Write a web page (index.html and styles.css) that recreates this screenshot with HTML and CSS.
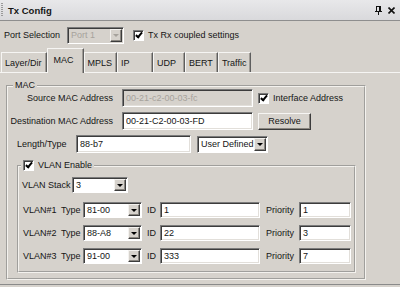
FILE: index.html
```html
<!DOCTYPE html>
<html lang="en">
<head>
    <meta charset="UTF-8">
    <meta name="viewport" content="width=device-width, initial-scale=1.0">
    <title>Tx Config</title>
    <link rel="stylesheet" href="styles.css">
</head>
<body>
    <div class="titlebar">
        <span class="grip"></span>
        <span class="title">Tx Config</span>
        <span class="title-btns">
            <svg width="7" height="9" viewBox="0 0 7 9">
                <rect x="1.5" y="0.5" width="4" height="5" fill="none" stroke="#111"/>
                <line x1="4.5" y1="0.5" x2="4.5" y2="5" stroke="#111"/>
                <line x1="0" y1="5.5" x2="7" y2="5.5" stroke="#111"/>
                <line x1="3.5" y1="6" x2="3.5" y2="9" stroke="#111"/>
            </svg>
            <svg width="7" height="7" viewBox="0 0 7 7">
                <path d="M0.5 0.5 L6.5 6.5 M6.5 0.5 L0.5 6.5" stroke="#111" stroke-width="1.6"/>
            </svg>
        </span>
    </div>

    <div class="toolbar">
        <span class="port-label">Port Selection</span>
        <div class="combo combo-port disabled"><span class="combo-text">Port 1</span><span class="drop"></span></div>
        <span class="check checked coupled-check"></span>
        <span class="check-text">Tx Rx coupled settings</span>
    </div>

    <div class="tabs">
        <span class="tab">Layer/Dir</span>
        <span class="tab active">MAC</span>
        <span class="tab">MPLS</span>
        <span class="tab tab-ip">IP</span>
        <span class="tab">UDP</span>
        <span class="tab">BERT</span>
        <span class="tab">Traffic</span>
    </div>

    <div class="panel">
        <fieldset class="group mac-group">
            <legend>MAC</legend>

            <div class="row first-row">
                <label class="addr-label">Source MAC Address</label>
                <input class="field addr-field" type="text" value="00-21-c2-00-03-fc" disabled>
                <span class="check checked side-check"></span>
                <span class="check-text">Interface Address</span>
            </div>

            <div class="row">
                <label class="addr-label">Destination MAC Address</label>
                <input class="field addr-field" type="text" value="00-21-C2-00-03-FD">
                <button class="btn">Resolve</button>
            </div>

            <div class="row">
                <label class="type-label">Length/Type</label>
                <input class="field type-field" type="text" value="88-b7">
                <div class="combo combo-type"><span class="combo-text">User Defined</span><span class="drop"></span></div>
            </div>

            <fieldset class="group vlan-group">
                <legend><span class="legend-check"><span class="check checked"></span>VLAN Enable</span></legend>

                <div class="stack-row">
                    <span class="stack-label">VLAN Stack</span>
                    <div class="combo combo-stack"><span class="combo-text">3</span><span class="drop"></span></div>
                </div>

                <div class="vlan-rows">
                    <div class="vlan-row">
                        <span class="vlan-name">VLAN#1</span>
                        <span class="vlan-type">Type</span>
                        <div class="combo combo-vtype"><span class="combo-text">81-00</span><span class="drop"></span></div>
                        <span class="vlan-id">ID</span>
                        <input class="field id-field" type="text" value="1">
                        <span class="vlan-prio">Priority</span>
                        <input class="field prio-field" type="text" value="1">
                    </div>
                    <div class="vlan-row">
                        <span class="vlan-name">VLAN#2</span>
                        <span class="vlan-type">Type</span>
                        <div class="combo combo-vtype"><span class="combo-text">88-A8</span><span class="drop"></span></div>
                        <span class="vlan-id">ID</span>
                        <input class="field id-field" type="text" value="22">
                        <span class="vlan-prio">Priority</span>
                        <input class="field prio-field" type="text" value="3">
                    </div>
                    <div class="vlan-row">
                        <span class="vlan-name">VLAN#3</span>
                        <span class="vlan-type">Type</span>
                        <div class="combo combo-vtype"><span class="combo-text">91-00</span><span class="drop"></span></div>
                        <span class="vlan-id">ID</span>
                        <input class="field id-field" type="text" value="333">
                        <span class="vlan-prio">Priority</span>
                        <input class="field prio-field" type="text" value="7">
                    </div>
                </div>
            </fieldset>
        </fieldset>
    </div>
</body>
</html>
```

FILE: styles.css
```css
body {
    margin: 0;
    width: 400px;
    height: 287px;
    overflow: hidden;
    background: #d6d2cc;
    font-family: "Liberation Sans", Arial, sans-serif;
    font-size: 9px;
    color: #151515;
}

/* form controls */
.field {
    box-sizing: border-box;
    margin: 0;
    padding: 0 3px;
    font: inherit;
    color: #151515;
    background: #fff;
    border: 1px solid;
    border-color: #7b7b7b #fff #fff #7b7b7b;
    box-shadow: inset 1px 1px 0 #3c3c3c, inset -1px -1px 0 #e2dfda;
    outline: none;
}
.field:disabled {
    background: #d6d2cc;
    color: #a6a29c;
}
.combo {
    box-sizing: border-box;
    display: flex;
    align-items: stretch;
    background: #fff;
    border: 1px solid;
    border-color: #7b7b7b #fff #fff #7b7b7b;
    box-shadow: inset 1px 1px 0 #3c3c3c;
    padding: 1px;
}
.combo-text {
    flex: 1;
    display: flex;
    align-items: center;
    padding-left: 2px;
}
.combo.disabled {
    background: #d6d2cc;
    color: #a6a29c;
}
.drop {
    width: 12px;
    box-sizing: border-box;
    display: flex;
    align-items: center;
    justify-content: center;
    background: #d6d2cc;
    border: 1px solid;
    border-color: #f4f2ef #3c3c3c #3c3c3c #f4f2ef;
    box-shadow: inset -1px -1px 0 #8a8680;
}
.drop::after {
    content: "";
    border-left: 3px solid transparent;
    border-right: 3px solid transparent;
    border-top: 3px solid #000;
}
.combo.disabled .drop::after {
    border-top-color: #a6a29c;
}
.check {
    width: 11px;
    height: 11px;
    box-sizing: border-box;
    display: inline-flex;
    align-items: center;
    justify-content: center;
    background: #fff;
    border: 1px solid;
    border-color: #7b7b7b #fff #fff #7b7b7b;
    box-shadow: inset 1px 1px 0 #3c3c3c;
}
.check.checked::after {
    content: "";
    width: 2px;
    height: 5px;
    margin-top: -2px;
    border-right: 2px solid #000;
    border-bottom: 2px solid #000;
    transform: rotate(40deg);
}
.btn {
    margin: 0;
    padding: 0;
    font: inherit;
    color: #151515;
    background: #d6d2cc;
    border: 1px solid;
    border-color: #f6f5f3 #3c3c3c #3c3c3c #f6f5f3;
    box-shadow: inset -1px -1px 0 #8a8680;
}

/* title bar */
.titlebar {
    height: 20px;
    display: flex;
    align-items: center;
    background: linear-gradient(#e8e8ea, #d9d9dc);
    border-bottom: 1px solid #8e8e8e;
}
.grip {
    width: 2px;
    height: 14px;
    margin-left: 1px;
    background: repeating-linear-gradient(#9a9a9a 0 1px, transparent 1px 2px);
}
.title {
    margin-left: 5px;
    font-weight: bold;
    font-size: 9.5px;
}
.title-btns {
    margin-left: auto;
    margin-right: 5px;
    display: flex;
    align-items: center;
    gap: 6px;
}

/* port selection row */
.toolbar {
    height: 28px;
    display: flex;
    align-items: center;
    padding-left: 4px;
}
.port-label {
    margin-right: 7px;
}
.combo-port {
    width: 57px;
    height: 17px;
}
.coupled-check {
    margin-left: 9px;
}
.check-text {
    margin-left: 4px;
}

/* tabs */
.tabs {
    height: 23px;
    display: flex;
    align-items: flex-end;
    padding-left: 1px;
}
.tab {
    position: relative;
    height: 20px;
    box-sizing: border-box;
    min-width: 32px;
    padding: 0 4px 0 3px;
    display: flex;
    align-items: center;
    border-top: 1px solid #f6f5f3;
    border-left: 1px solid #f6f5f3;
    border-right: 1px solid #5e5e5e;
    box-shadow: inset -1px 0 #a09c96;
}
.tab-ip {
    min-width: 36px;
}
.tab.active {
    height: 25px;
    margin-bottom: -1px;
    z-index: 1;
    background: #d6d2cc;
    min-width: 37px;
    padding: 0 4px 3px 6px;
}

/* tab panel */
.panel {
    height: 211px;
    border-top: 1px solid #f6f5f3;
    border-bottom: 1px solid #8a8a8a;
}

/* group boxes */
.group {
    margin: 0;
    padding: 0;
    border: 2px groove #f4f2ee;
    box-sizing: border-box;
}
.group legend {
    padding: 0 2px;
    margin-left: 5px;
    line-height: 11px;
}
.mac-group {
    margin: 7px 0 0 6px;
    width: 360px;
    padding-bottom: 5px;
}
.row {
    display: flex;
    align-items: center;
    margin-top: 5px;
}
.first-row {
    margin-top: -2px;
}
.addr-label {
    width: 105px;
    flex-shrink: 0;
    text-align: right;
}
.addr-field {
    margin-left: 9px;
    width: 131px;
    height: 18px;
}
.side-check {
    margin-left: 5px;
}
.row .btn {
    margin-left: 5px;
    width: 53px;
    height: 17px;
}
.type-label {
    width: 59px;
    padding-left: 9px;
}
.type-field {
    width: 115px;
    height: 18px;
}
.combo-type {
    margin-left: 6px;
    width: 71px;
    height: 17px;
}

/* VLAN group */
.vlan-group {
    margin: 7px 0 0 9px;
    width: 339px;
    padding: 0 0 7px 0;
}
.vlan-group legend {
    margin-left: 2px;
}
.legend-check {
    display: inline-flex;
    align-items: center;
    gap: 4px;
}
.stack-row {
    display: flex;
    align-items: center;
    margin-top: 6px;
    padding-left: 3px;
}
.stack-label {
    width: 50px;
}
.combo-stack {
    width: 56px;
    height: 16px;
}
.vlan-rows {
    margin-top: 9px;
    display: flex;
    flex-direction: column;
    gap: 7px;
}
.vlan-row {
    display: flex;
    align-items: center;
    padding-left: 4px;
}
.vlan-name {
    width: 38px;
}
.vlan-type {
    width: 22px;
}
.combo-vtype {
    width: 59px;
    height: 16px;
}
.vlan-id {
    margin-left: 5px;
    width: 13px;
}
.id-field {
    width: 100px;
    height: 16px;
}
.vlan-prio {
    margin-left: 6px;
    width: 33px;
}
.prio-field {
    width: 52px;
    height: 16px;
}
```
